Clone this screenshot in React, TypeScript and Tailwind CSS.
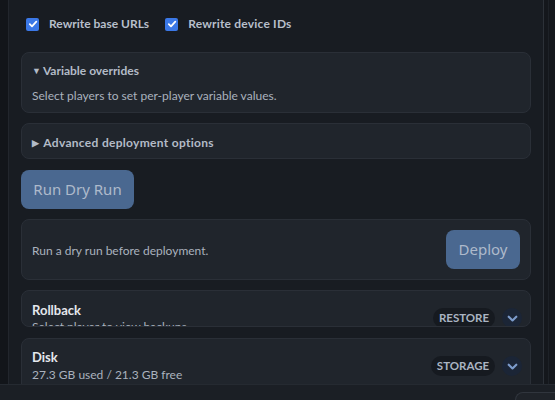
import React from "react";

const Check = () => (
  <span className="flex h-[13px] w-[13px] items-center justify-center rounded-[2px] bg-[#3b78e7]">
    <svg width="10" height="10" viewBox="0 0 10 10" fill="none">
      <path d="M1.8 5.2 L4 7.3 L8.3 2.6" stroke="white" strokeWidth="1.8" strokeLinecap="round" strokeLinejoin="round" />
    </svg>
  </span>
);

const Chevron = () => (
  <span className="flex h-[20px] w-[20px] items-center justify-center rounded-full bg-[#1b2536]">
    <svg width="13" height="13" viewBox="0 0 12 12" fill="none">
      <path d="M2.5 4.3 L6 7.8 L9.5 4.3" stroke="#7d9ccc" strokeWidth="2" strokeLinecap="round" strokeLinejoin="round" />
    </svg>
  </span>
);

const lato = { fontFamily: 'Lato, "Noto Sans", Arial, sans-serif' };

export default function App() {
  return (
    <div
      className="flex h-[400px] w-[555px] flex-col overflow-hidden bg-[#13161b]"
      style={{ fontFamily: '"Noto Sans", "Open Sans", Arial, sans-serif' }}
    >
      <div className="flex h-[384px] shrink-0 overflow-hidden">
        <div className="w-[9px] shrink-0 border-r border-[#22262d] bg-[#12151a]" />
        <div className="flex w-[535px] shrink-0 flex-col border-r border-[#2c3138] bg-[#181c22] pl-[12px] pr-[12px]">
          <div className="mt-[16px] flex h-[16px] shrink-0 items-center text-[12px] font-bold text-[#b7bfcb]" style={lato}>
            <span className="ml-[5px]"><Check /></span>
            <span className="ml-[10px]">Rewrite base URLs</span>
            <span className="ml-[16px]"><Check /></span>
            <span className="ml-[10px] tracking-[0.2px]">Rewrite device IDs</span>
          </div>

          <div className="mt-[20px] h-[61px] shrink-0 rounded-[8px] border border-[#2a2f37] bg-[#20252c] px-[10px] pt-[10px]" style={lato}>
            <div className="flex h-[16px] items-center text-[12px] font-bold text-[#b3bbc7]">
              <span className="mr-[2px] text-[9px]">▼</span>Variable overrides
            </div>
            <div className="mt-[9px] h-[16px] text-[12px] leading-[16px] text-[#aab2be]">
              Select players to set per-player variable values.
            </div>
          </div>

          <div className="mt-[10px] h-[36px] shrink-0 rounded-[8px] border border-[#2a2f37] bg-[#20252c] px-[10px] pt-[11px]" style={lato}>
            <div className="flex h-[16px] items-center text-[12px] font-bold tracking-[0.3px] text-[#b3bbc7]">
              <span className="mr-[4px] text-[9px]">▶</span>Advanced deployment options
            </div>
          </div>

          <button className="mt-[11px] flex h-[39px] w-[113px] shrink-0 items-center justify-center rounded-[8px] bg-[#4a6890] text-[15px] text-[#aebacb]">
            Run Dry Run
          </button>

          <div className="mt-[10px] flex h-[61px] shrink-0 items-center justify-between rounded-[8px] border border-[#2a2f37] bg-[#20252c] pl-[10px] pr-[10px]">
            <span className="pt-[3px] text-[12px] text-[#aab2be]" style={lato}>Run a dry run before deployment.</span>
            <button className="flex h-[39px] w-[74px] items-center justify-center rounded-[8px] bg-[#4a6890] text-[15px] text-[#aebacb]">
              Deploy
            </button>
          </div>

          <div className="mt-[10px] h-[37px] shrink-0 overflow-hidden rounded-[8px] border border-[#2a2f37] bg-[#20252c] pl-[10px] pr-[8px] pt-[10px]" style={lato}>
            <div className="flex items-center justify-between">
              <div>
                <div className="h-[18px] text-[13px] font-bold leading-[18px] text-[#e4e7ec]">Rollback</div>
                <div className="h-[16px] text-[12px] leading-[16px] text-[#aab2be]">Select player to view backups</div>
              </div>
              <div className="flex items-center gap-[7px]">
                <span className="flex h-[20px] w-[62px] items-center justify-center rounded-full bg-[#161a20] text-[11.5px] font-bold text-[#aab4c2]">
                  RESTORE
                </span>
                <Chevron />
              </div>
            </div>
          </div>

          <div className="mt-[11px] h-[60px] shrink-0 overflow-hidden rounded-[8px] border border-[#2a2f37] bg-[#20252c] pl-[10px] pr-[8px] pt-[9px]" style={lato}>
            <div className="flex items-center justify-between">
              <div>
                <div className="h-[18px] text-[13px] font-bold leading-[18px] text-[#e4e7ec]">Disk</div>
                <div className="h-[18px] text-[12px] leading-[18px] text-[#aab2be]">27.3 GB used / 21.3 GB free</div>
              </div>
              <div className="flex items-center gap-[7px]">
                <span className="flex h-[20px] w-[64px] items-center justify-center rounded-full bg-[#161a20] text-[11.5px] font-bold text-[#aab4c2]">
                  STORAGE
                </span>
                <Chevron />
              </div>
            </div>
          </div>
        </div>
        <div className="flex-1 bg-[#14171c]">
          <div className="ml-[4px] h-full w-px bg-[#1d2127]" />
        </div>
      </div>
      <div className="flex h-[16px] shrink-0 justify-end border-t border-[#252a31] bg-[#1b1f25]">
        <div className="mt-[7px] h-[10px] w-[40px] rounded-tl-[8px] border-l border-t border-[#30353d] bg-[#1f2329]" />
      </div>
    </div>
  );
}
